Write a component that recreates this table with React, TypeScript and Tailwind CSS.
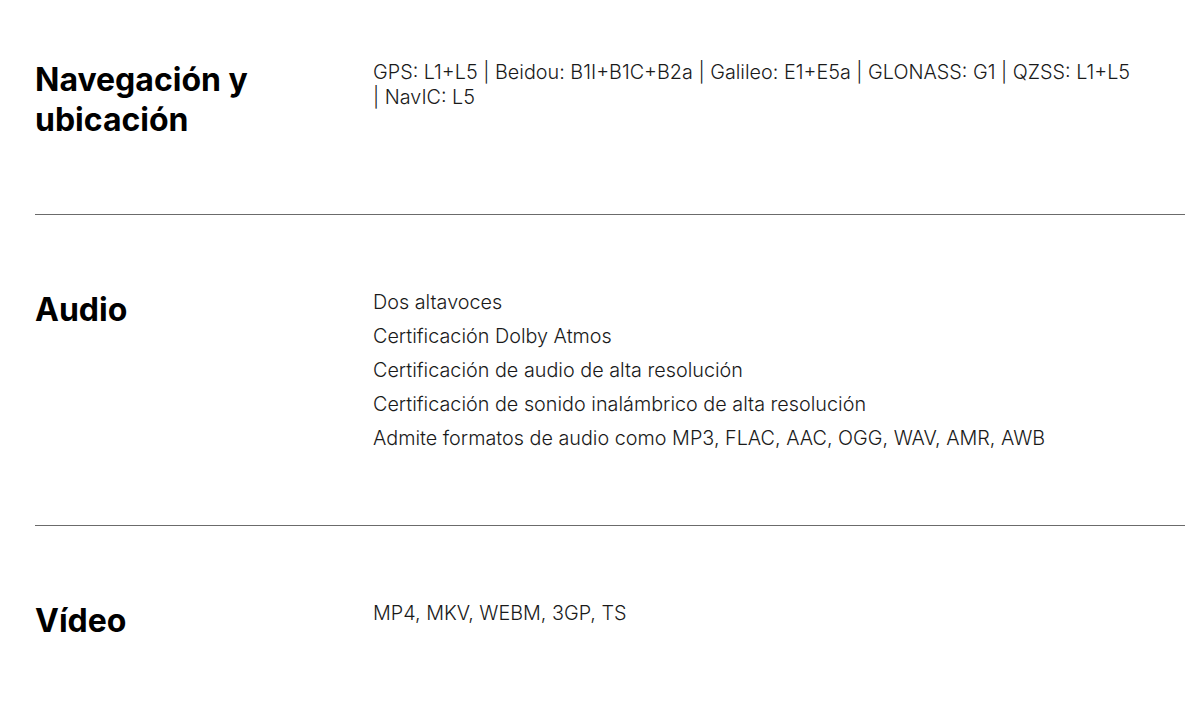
type Spec = {
  title: string
  lines: string[]
}

const specs: Spec[] = [
  {
    title: 'Navegación y ubicación',
    lines: ['GPS: L1+L5 | Beidou: B1I+B1C+B2a | Galileo: E1+E5a | GLONASS: G1 | QZSS: L1+L5 | NavIC: L5'],
  },
  {
    title: 'Audio',
    lines: [
      'Dos altavoces',
      'Certificación Dolby Atmos',
      'Certificación de audio de alta resolución',
      'Certificación de sonido inalámbrico de alta resolución',
      'Admite formatos de audio como MP3, FLAC, AAC, OGG, WAV, AMR, AWB',
    ],
  },
  {
    title: 'Vídeo',
    lines: ['MP4, MKV, WEBM, 3GP, TS'],
  },
]

function SpecRow({ spec, first }: { spec: Spec; first: boolean }) {
  return (
    <section
      className={`flex items-start pb-[74px] ${first ? 'pt-[60px]' : 'pt-[75px] border-t border-[#6b6b6b]'}`}
    >
      <h2 className="w-[338px] shrink-0 pr-8 text-[32px] leading-[40px] font-bold text-black">
        {spec.title}
      </h2>
      <ul className="w-[762px] flex flex-col gap-[9px] text-[19.8px] leading-[25px] font-light text-[#1a1a1a]">
        {spec.lines.map((l) => (
          <li key={l}>{l}</li>
        ))}
      </ul>
    </section>
  )
}

export default function App() {
  return (
    <div className="min-h-screen bg-white pl-[35px] pr-[5px]" style={{ fontFamily: 'Inter, sans-serif' }}>
      {specs.map((s, i) => (
        <SpecRow key={s.title} spec={s} first={i === 0} />
      ))}
    </div>
  )
}
